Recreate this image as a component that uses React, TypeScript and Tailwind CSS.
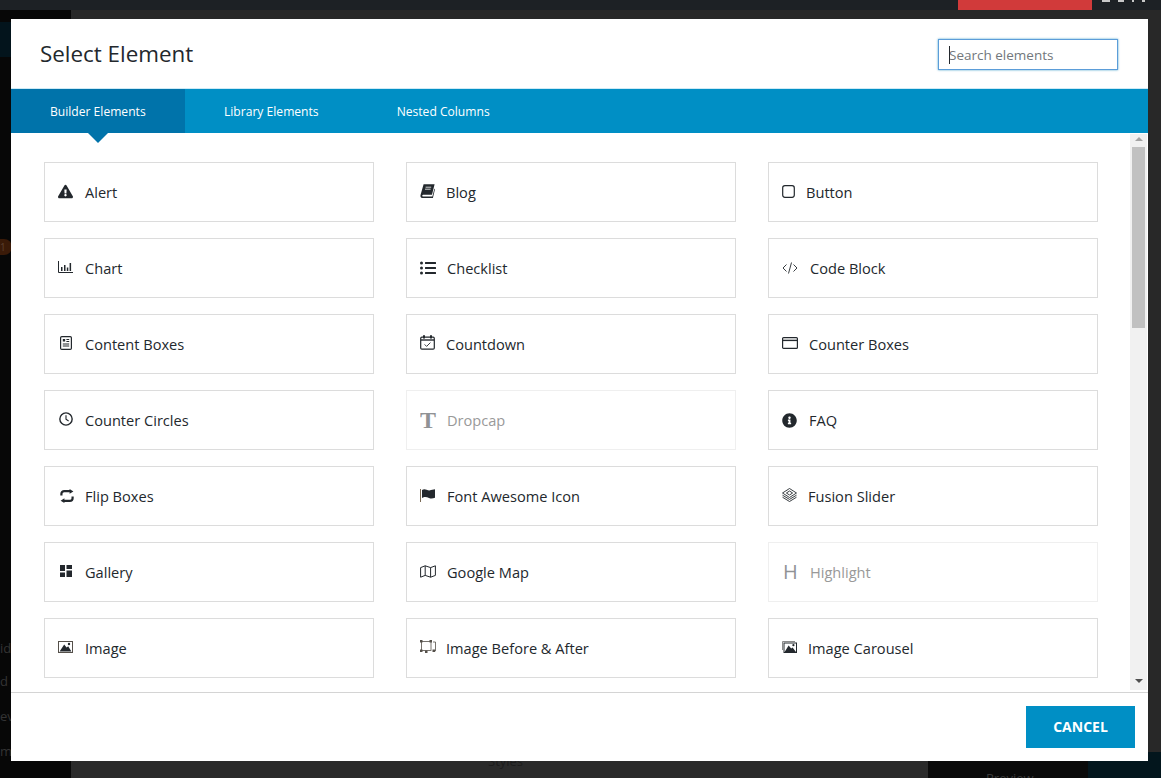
import type { ReactNode } from 'react'
import { FaExclamationTriangle, FaInfoCircle, FaListUl } from 'react-icons/fa'

type Item = {
  label: string
  icon: ReactNode
  box: string
  muted?: boolean
}

const ink = '#23282d'

const items: Item[] = [
  { label: 'Alert', box: 'w-[27px]', icon: <FaExclamationTriangle className="-mt-px h-[15px] w-[15px]" color={ink} /> },
  {
    label: 'Blog',
    box: 'w-[26px]',
    icon: (
      <svg viewBox="0 0 15 14" className="-mt-[2px] h-[14px] w-[15px]">
        <path d="M3.6 0.3h11l-2.6 10.4H3.2c-1 0-1.4 1.7-.2 1.7h9.4l2-8 .5 1-2 8.6H2.4C.6 14 .1 12.5.6 10.8z" fill={ink} />
        <path d="M5.6 3.2h5.6M5 5.2h5.6" stroke="#fff" strokeWidth="0.8" />
      </svg>
    ),
  },
  {
    label: 'Button',
    box: 'w-[24px]',
    icon: (
      <svg viewBox="0 0 13 13" className="-mt-[2px] h-[13px] w-[13px]">
        <rect x="0.7" y="0.7" width="11.6" height="11.6" rx="2.2" fill="none" stroke={ink} strokeWidth="1.2" />
      </svg>
    ),
  },
  {
    label: 'Chart',
    box: 'w-[27px]',
    icon: (
      <svg viewBox="0 0 15 12" className="-mt-[3px] h-[12px] w-[15px]">
        <path d="M.5 0v11.5H15" fill="none" stroke={ink} strokeWidth="1" />
        <path d="M3 6h1.5v4H3zM6 4h1.5v6H6zM8.8 6.5h1.5V10H8.8zM11.6 2h1.5v8h-1.5z" fill={ink} />
      </svg>
    ),
  },
  { label: 'Checklist', box: 'w-[27px]', icon: <FaListUl className="-mt-px h-[16px] w-[16px]" color={ink} /> },
  {
    label: 'Code Block',
    box: 'w-[28px]',
    icon: (
      <svg viewBox="0 0 16 12" className="-mt-px h-[12px] w-[16px]">
        <path d="M4.5 2.5 1 6l3.5 3.5M11.5 2.5 15 6l-3.5 3.5M9.5.5l-3 11" fill="none" stroke={ink} strokeWidth="0.9" />
      </svg>
    ),
  },
  {
    label: 'Content Boxes',
    box: 'w-[27px]',
    icon: (
      <svg viewBox="0 0 15 14" className="-mt-[2px] h-[14px] w-[15px]">
        <rect x="2.6" y="0.6" width="10.8" height="12.8" rx="1.2" fill="none" stroke={ink} strokeWidth="1.2" />
        <path d="M4.8 3h2.4v2.6H4.8zM8.4 3h2.8v1H8.4zM8.4 5h2.8v1H8.4zM4.8 7.4h6.4v1H4.8zM4.8 9.6h6.4v1H4.8z" fill={ink} />
      </svg>
    ),
  },
  {
    label: 'Countdown',
    box: 'w-[26px]',
    icon: (
      <svg viewBox="0 0 15 15" className="-mt-[3px] h-[15px] w-[15px]">
        <rect x="0.7" y="2.2" width="13.6" height="12" rx="1.2" fill="none" stroke={ink} strokeWidth="1.2" />
        <path d="M1 5h13" stroke={ink} strokeWidth="1.4" />
        <path d="M4 0.2v3.2M11 0.2v3.2" stroke={ink} strokeWidth="2" />
        <path d="m4.6 9.4 2 2 3.8-3.8" fill="none" stroke={ink} strokeWidth="0.9" />
      </svg>
    ),
  },
  {
    label: 'Counter Boxes',
    box: 'w-[27px]',
    icon: (
      <svg viewBox="0 0 16 12" className="-mt-[3px] h-[12px] w-[16px]">
        <rect x="0.6" y="0.6" width="14.8" height="10.8" rx="1" fill="none" stroke={ink} strokeWidth="1.2" />
        <path d="M1 3.4h14" stroke={ink} strokeWidth="1.4" />
      </svg>
    ),
  },
  {
    label: 'Counter Circles',
    box: 'w-[27px]',
    icon: (
      <svg viewBox="0 0 15 15" className="-mt-[2px] ml-px h-[14px] w-[14px]">
        <circle cx="7.5" cy="7.5" r="6.6" fill="none" stroke={ink} strokeWidth="1.5" />
        <path d="M7.5 3.4v4.4l2.8 1.8" fill="none" stroke={ink} strokeWidth="1.2" />
      </svg>
    ),
  },
  {
    label: 'Dropcap',
    box: 'w-[27px]',
    muted: true,
    icon: <span className="font-['Liberation_Serif',serif] text-[24px] leading-none font-bold text-[#23282d]">T</span>,
  },
  { label: 'FAQ', box: 'w-[27px]', icon: <FaInfoCircle className="h-[15px] w-[15px]" color={ink} /> },
  {
    label: 'Flip Boxes',
    box: 'w-[27px]',
    icon: (
      <svg viewBox="0 0 14 14" className="-mt-px ml-[2px] h-[14px] w-[14px]">
        <path d="M1.4 6.6V4.8C1.4 3 2.6 2.2 4.2 2.2h6.2M12.6 7.4v1.8c0 1.8-1.2 2.6-2.8 2.6H3.6" fill="none" stroke={ink} strokeWidth="2.2" />
        <path d="M9.6 0l3.8 2.4-3.8 2.4zM4.4 9.2.6 11.8l3.8 2.2z" fill={ink} />
      </svg>
    ),
  },
  {
    label: 'Font Awesome Icon',
    box: 'w-[27px]',
    icon: (
      <svg viewBox="0 0 15 13" className="-mt-[2px] h-[13px] w-[15px]">
        <path d="M.5 0v13" stroke="#7a6a55" strokeWidth="1" />
        <path d="M2 1c1.5-.9 3-.9 4.6-.2s3 .9 4.4.3l4-.8v8.4c-2.4.9-4.2 1-6 .2S5 7.6 3.6 8.3L2 9.1z" fill={ink} />
      </svg>
    ),
  },
  {
    label: 'Fusion Slider',
    box: 'w-[26px]',
    icon: (
      <svg viewBox="0 0 15 14" className="-mt-[2px] h-[14px] w-[15px]">
        <path d="M7.5.5 14.5 5 7.5 9.5.5 5zM.5 7.2l7 4.2 7-4.2M.5 9.2l7 4.3 7-4.3" fill="none" stroke={ink} strokeWidth="0.9" />
        <path d="M7.5 3 10.6 5 7.5 7 4.4 5z" fill="none" stroke={ink} strokeWidth="0.9" />
      </svg>
    ),
  },
  {
    label: 'Gallery',
    box: 'w-[27px]',
    icon: (
      <svg viewBox="0 0 12 12" className="-mt-[2px] ml-[2px] h-[12px] w-[12px]">
        <path d="M0 0h5v6H0zM6.5 0H12v4H6.5zM0 7.5h5V12H0zM6.5 5.5H12V12H6.5z" fill={ink} />
      </svg>
    ),
  },
  {
    label: 'Google Map',
    box: 'w-[27px]',
    icon: (
      <svg viewBox="0 0 16 13" className="-mt-[2px] h-[13px] w-[16px]">
        <path d="M.6 2.6 5.2.8l5.4 1.8 4.8-1.8v9.6l-4.8 1.8-5.4-1.8L.6 12.2zM5.2.8v9.6M10.6 2.6v9.6" fill="none" stroke={ink} strokeWidth="1" />
      </svg>
    ),
  },
  {
    label: 'Highlight',
    box: 'w-[28px]',
    muted: true,
    icon: <span className="ml-px font-['Open_Sans',sans-serif] text-[20px] leading-none font-medium text-[#23282d]">H</span>,
  },
  {
    label: 'Image',
    box: 'w-[27px]',
    icon: (
      <svg viewBox="0 0 15 12" className="-mt-[3px] h-[12px] w-[15px]">
        <rect x="0.5" y="0.5" width="14" height="11" fill="none" stroke="#55504a" strokeWidth="1" />
        <path d="M1.6 10.6 6.2 3.4l2.4 3 1.6-1.2 3.2 5.4z" fill={ink} />
        <circle cx="11" cy="3" r="1.2" fill={ink} />
      </svg>
    ),
  },
  {
    label: 'Image Before & After',
    box: 'w-[26px]',
    icon: (
      <svg viewBox="0 0 16 13" className="-mt-[3px] h-[13px] w-[16px]">
        <rect x="1.5" y="1.5" width="9.5" height="9" fill="none" stroke="#55504a" strokeWidth="0.8" />
        <path d="M13 2h2.5v9H13" fill="none" stroke="#55504a" strokeWidth="0.8" />
        <path d="M0 0h2.5v2.5H0zM9.5 0H12v2.5H9.5zM0 9.5h2.5V12H0zM5 10.5h2.5V13H5zM12.5 9.5H15V12h-2.5z" fill="#55504a" />
      </svg>
    ),
  },
  {
    label: 'Image Carousel',
    box: 'w-[26px]',
    icon: (
      <svg viewBox="0 0 15 12" className="-mt-[3px] h-[12px] w-[15px]">
        <path d="M.5 9V.5H13" fill="none" stroke="#8a8a8a" strokeWidth="1" />
        <rect x="2" y="2" width="12.5" height="9.5" fill="#fff" stroke={ink} strokeWidth="1" />
        <path d="M2.6 11 6.6 4.4l2.6 3 1.4-1 3.4 4.6z" fill={ink} />
        <circle cx="11.4" cy="4.2" r="1.1" fill={ink} />
      </svg>
    ),
  },
]

function ElementCard({ item }: { item: Item }) {
  return (
    <div
      className={`flex h-[60px] items-center border pl-[13px] text-[14.6px] ${
        item.muted ? 'border-[#efefef] text-[#999]' : 'border-[#dcdcdc] text-[#23282d]'
      }`}
    >
      <span className={`flex shrink-0 items-center ${item.box} ${item.muted ? 'opacity-50' : ''}`}>{item.icon}</span>
      <span className="pt-[2px]">{item.label}</span>
    </div>
  )
}

export default function App() {
  return (
    <div className="relative h-[778px] w-[1161px] overflow-hidden bg-[#282828] font-['Open_Sans','Liberation_Sans',sans-serif]">
      {/* page behind the dialog */}
      <div className="flex h-[10px] items-end justify-between overflow-hidden bg-[#1d2125]">
        <div className="ml-[75px] h-[3px] self-start overflow-hidden whitespace-pre text-[13px] leading-[3px] text-[#8a8a8a]">
          <span className="relative -top-[11px]">{'p    j   g  y  p   j   g   y    p        y'}</span>
        </div>
        <div className="flex h-full items-start">
          <div className="mr-[10px] h-full w-[134px] bg-[#d13a3a]" />
          <div className="mr-[16px] flex gap-[8px]">
            <span className="h-[2px] w-[8px] bg-[#c8c8c8]" />
            <span className="h-[2px] w-[6px] bg-[#c8c8c8]" />
            <span className="h-[2px] w-[2px] bg-[#c8c8c8]" />
            <span className="h-[2px] w-[3px] bg-[#c8c8c8]" />
          </div>
        </div>
      </div>
      <div className="flex h-[768px]">
        <div className="flex w-[71px] flex-col bg-[#070707] text-[13px] leading-[20px] text-[#343434]">
          <div className="h-[12px]" />
          <div className="h-[35px] bg-[#03141c]" />
          <div className="mt-[182px] flex h-[16px] w-[12px] items-center rounded-r-full bg-[#3a1a08] text-[10px] text-[#5a4030]">1</div>
          <div className="mt-[383px]">id</div>
          <div className="mt-[13px]">d</div>
          <div className="mt-[15px]">ev</div>
          <div className="mt-[15px]">mi</div>
        </div>
        <div className="flex flex-1 flex-col justify-end">
          <div className="flex h-[26px] text-[13px]">
            <div className="flex-1 bg-[#2a2a2a] pl-[417px] leading-[18px] text-[#1c1c1c]">Styles</div>
            <div className="w-[160px] bg-[#0a0a0a] pt-[16px] pl-[58px] leading-[20px] text-[#3a3a3a]">Preview</div>
            <div className="w-[73px] bg-[#03161d]" />
          </div>
        </div>
      </div>

      {/* dialog */}
      <div className="absolute top-[19px] left-[11px] flex h-[742px] w-[1137px] flex-col bg-white">
        <div className="flex h-[70px] shrink-0 items-center justify-between border-b border-[#cdeaf6] pr-[30px] pl-[29px]">
          <h2 className="text-[22.4px] font-medium text-[#23282d]">Select Element</h2>
          <div className="relative mt-[2px]">
            <input
              readOnly
              placeholder="Search elements"
              className="h-[31px] w-[180px] border border-[#5b9dd9] pl-[10px] text-[13.5px] shadow-[0_0_2px_rgba(30,140,190,0.8)] outline-none placeholder:text-[#72777c]"
            />
            <span className="absolute top-[7px] left-[11px] h-[18px] w-px bg-[#23282d]" />
          </div>
        </div>

        <div className="relative flex h-[44px] shrink-0 bg-[#008fc5] text-[12.1px] text-white">
          <div className="relative flex w-[174px] items-center bg-[#0073aa] pt-[2px] pl-[39px]">
            Builder Elements
            <span className="absolute top-full left-[77px] h-0 w-0 border-x-[10px] border-t-[10px] border-x-transparent border-t-[#0073aa]" />
          </div>
          <div className="flex items-center pt-[2px] pl-[39px]">Library Elements</div>
          <div className="flex items-center pt-[2px] pl-[78px]">Nested Columns</div>
        </div>

        <div className="flex min-h-0 flex-1 border-b border-[#d4d4d4]">
          <div className="w-[1119px] pt-[29px] pl-[33px]">
            <div className="grid w-[1054px] grid-cols-3 gap-x-[32px] gap-y-[16px]">
              {items.map((item) => (
                <ElementCard key={item.label} item={item} />
              ))}
            </div>
          </div>
          <div className="mt-px mb-[2px] flex w-[17px] flex-col items-center bg-[#f1f1f1]">
            <span className="mt-[3px] h-0 w-0 border-x-[4px] border-b-[4px] border-x-transparent border-b-[#a3a3a3]" />
            <span className="mt-[6px] h-[181px] w-[13px] bg-[#c1c1c1]" />
            <span className="mt-auto mb-[7px] h-0 w-0 border-x-[4px] border-t-[4px] border-x-transparent border-t-[#505050]" />
          </div>
        </div>

        <div className="flex h-[68px] shrink-0 items-center justify-end pr-[13px]">
          <button className="h-[42px] w-[109px] bg-[#008fc5] pb-[2px] text-[14px] font-bold text-white">CANCEL</button>
        </div>
      </div>
    </div>
  )
}
